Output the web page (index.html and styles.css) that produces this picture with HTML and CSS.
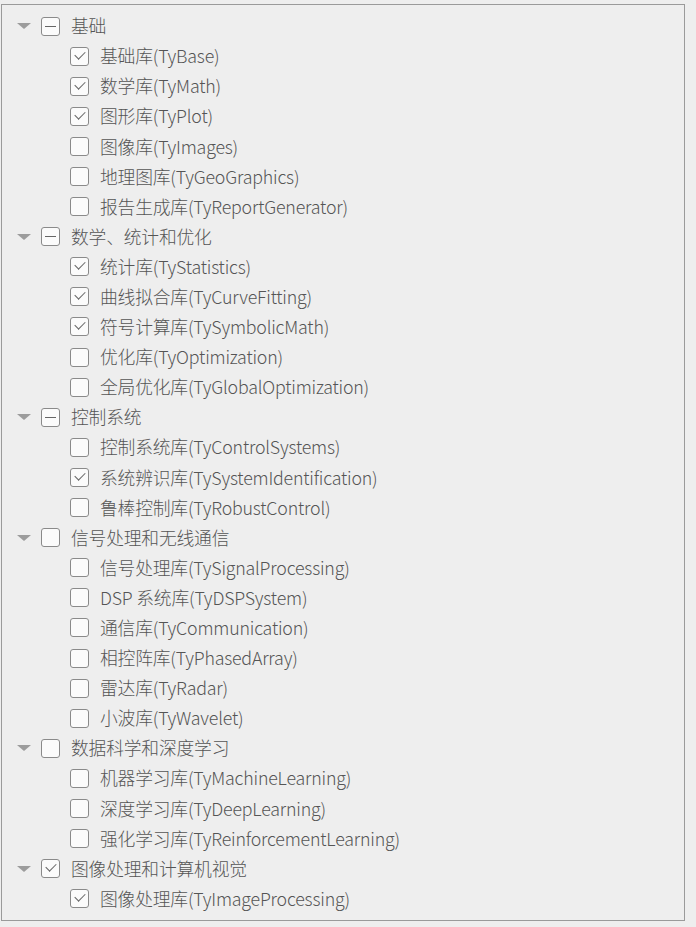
FILE: index.html
```html
<!DOCTYPE html>
<html lang="zh">
<head>
<meta charset="utf-8">
<link rel="stylesheet" href="styles.css">
</head>
<body>
<div class="tree">
  <div class="row group"><span class="arrow"></span><span class="cb partial"></span><span class="label">基础</span></div>
  <div class="row child"><span class="cb checked"></span><span class="label">基础库(TyBase)</span></div>
  <div class="row child"><span class="cb checked"></span><span class="label">数学库(TyMath)</span></div>
  <div class="row child"><span class="cb checked"></span><span class="label">图形库(TyPlot)</span></div>
  <div class="row child"><span class="cb"></span><span class="label">图像库(TyImages)</span></div>
  <div class="row child"><span class="cb"></span><span class="label">地理图库(TyGeoGraphics)</span></div>
  <div class="row child"><span class="cb"></span><span class="label">报告生成库(TyReportGenerator)</span></div>

  <div class="row group"><span class="arrow"></span><span class="cb partial"></span><span class="label">数学、统计和优化</span></div>
  <div class="row child"><span class="cb checked"></span><span class="label">统计库(TyStatistics)</span></div>
  <div class="row child"><span class="cb checked"></span><span class="label">曲线拟合库(TyCurveFitting)</span></div>
  <div class="row child"><span class="cb checked"></span><span class="label">符号计算库(TySymbolicMath)</span></div>
  <div class="row child"><span class="cb"></span><span class="label">优化库(TyOptimization)</span></div>
  <div class="row child"><span class="cb"></span><span class="label">全局优化库(TyGlobalOptimization)</span></div>

  <div class="row group"><span class="arrow"></span><span class="cb partial"></span><span class="label">控制系统</span></div>
  <div class="row child"><span class="cb"></span><span class="label">控制系统库(TyControlSystems)</span></div>
  <div class="row child"><span class="cb checked"></span><span class="label">系统辨识库(TySystemIdentification)</span></div>
  <div class="row child"><span class="cb"></span><span class="label">鲁棒控制库(TyRobustControl)</span></div>

  <div class="row group"><span class="arrow"></span><span class="cb"></span><span class="label">信号处理和无线通信</span></div>
  <div class="row child"><span class="cb"></span><span class="label">信号处理库(TySignalProcessing)</span></div>
  <div class="row child"><span class="cb"></span><span class="label">DSP 系统库(TyDSPSystem)</span></div>
  <div class="row child"><span class="cb"></span><span class="label">通信库(TyCommunication)</span></div>
  <div class="row child"><span class="cb"></span><span class="label">相控阵库(TyPhasedArray)</span></div>
  <div class="row child"><span class="cb"></span><span class="label">雷达库(TyRadar)</span></div>
  <div class="row child"><span class="cb"></span><span class="label">小波库(TyWavelet)</span></div>

  <div class="row group"><span class="arrow"></span><span class="cb"></span><span class="label">数据科学和深度学习</span></div>
  <div class="row child"><span class="cb"></span><span class="label">机器学习库(TyMachineLearning)</span></div>
  <div class="row child"><span class="cb"></span><span class="label">深度学习库(TyDeepLearning)</span></div>
  <div class="row child"><span class="cb"></span><span class="label">强化学习库(TyReinforcementLearning)</span></div>

  <div class="row group"><span class="arrow"></span><span class="cb checked"></span><span class="label">图像处理和计算机视觉</span></div>
  <div class="row child"><span class="cb checked"></span><span class="label">图像处理库(TyImageProcessing)</span></div>
</div>
</body>
</html>
```
FILE: styles.css
```css
html, body {
  margin: 0;
  padding: 0;
  background: #eeeeee;
}
body {
  padding: 4px 0 0 1px;
  font-family: "Noto Sans CJK SC", "Noto Sans", sans-serif;
  font-size: 17.8px;
  font-weight: 300;
  letter-spacing: -0.2px;
  color: #555555;
}
.tree {
  width: 684px;
  height: 917px;
  box-sizing: border-box;
  border: 1px solid #9a9a9a;
  padding: 6px 0 0 0;
  background: #eeeeee;
}
.row {
  display: flex;
  align-items: center;
  height: 30.1px;
}
.group {
  padding-left: 15px;
}
.child {
  padding-left: 68px;
}
.arrow {
  width: 0;
  height: 0;
  border-left: 7.5px solid transparent;
  border-right: 7.5px solid transparent;
  border-top: 6px solid #9c9c9c;
  margin-right: 10px;
}
.cb {
  position: relative;
  width: 19px;
  height: 19px;
  box-sizing: border-box;
  border: 1px solid #8a8a8a;
  border-radius: 3px;
  background: #fbfbfb;
  margin-right: 11px;
  flex: none;
}
.cb.partial::after {
  content: "";
  position: absolute;
  left: 3px;
  right: 3px;
  top: 8px;
  height: 1px;
  background: #666;
}
.cb.checked::after {
  content: "";
  position: absolute;
  width: 5px;
  height: 9px;
  border-right: 1px solid #666;
  border-bottom: 1px solid #666;
  transform: rotate(45deg);
  transform-origin: center;
  left: 6px;
  top: 1px;
}
.label {
  white-space: nowrap;
  line-height: 1;
}
```
